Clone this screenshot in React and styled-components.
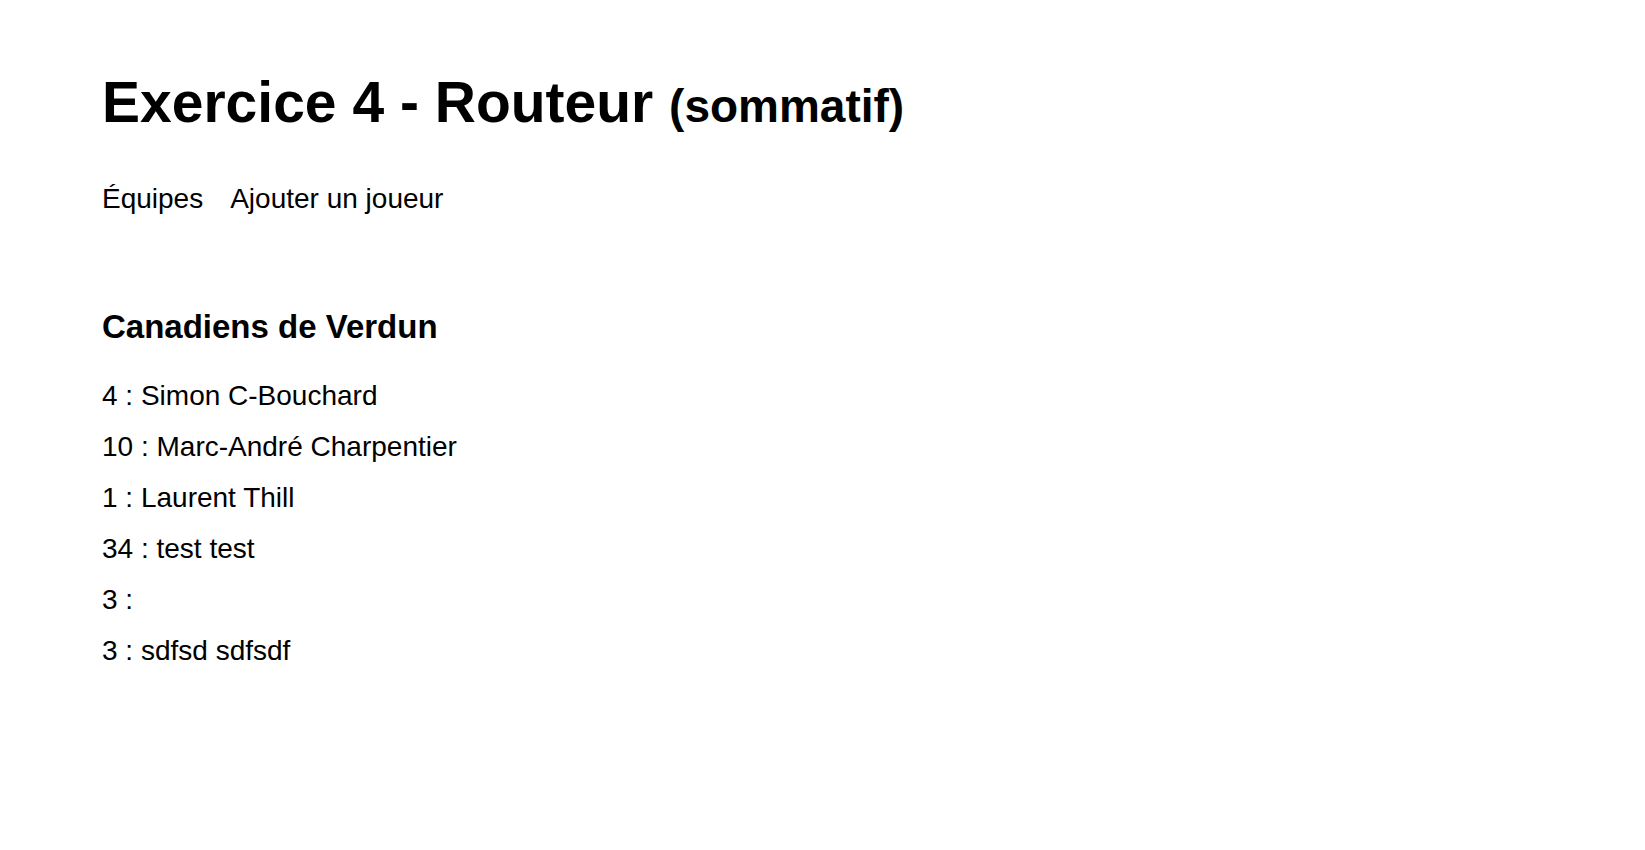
import React from "react";
import styled, { createGlobalStyle } from "styled-components";

const GlobalStyle = createGlobalStyle`
  body {
    margin: 0;
    background: #fff;
    color: #000;
    font: 28px/34px "Liberation Sans", Arial, sans-serif;
  }
`;

const Page = styled.div`
  padding: 70px 102px;
`;

const Title = styled.h1`
  margin: 0 0 48px;
  font-size: 57px;
  line-height: 64px;
`;

const Subtitle = styled.small`
  font-size: 46px;
  line-height: 1;
`;

const Nav = styled.nav`
  display: flex;
  gap: 27px;
  margin-bottom: 92px;
`;

const NavLink = styled.a`
  color: inherit;
  text-decoration: none;
`;

const TeamName = styled.h2`
  margin: 0 0 33px;
  font-size: 33px;
  line-height: 38px;
`;

const Roster = styled.ul`
  display: grid;
  gap: 17px;
  margin: 0;
  padding: 0;
  list-style: none;
`;

const Player = styled.li`
  margin: 0;
`;

const players = [
  { number: 4, name: "Simon C-Bouchard" },
  { number: 10, name: "Marc-André Charpentier" },
  { number: 1, name: "Laurent Thill" },
  { number: 34, name: "test test" },
  { number: 3, name: "" },
  { number: 3, name: "sdfsd sdfsdf" },
];

export default function App() {
  return (
    <Page>
      <GlobalStyle />
      <header>
        <Title>
          Exercice 4 - Routeur <Subtitle>(sommatif)</Subtitle>
        </Title>
        <Nav>
          <NavLink href="#equipes">Équipes</NavLink>
          <NavLink href="#ajouter">Ajouter un joueur</NavLink>
        </Nav>
      </header>
      <main>
        <TeamName>Canadiens de Verdun</TeamName>
        <Roster>
          {players.map(({ number, name }, index) => (
            <Player key={index}>
              {number} : {name}
            </Player>
          ))}
        </Roster>
      </main>
    </Page>
  );
}
